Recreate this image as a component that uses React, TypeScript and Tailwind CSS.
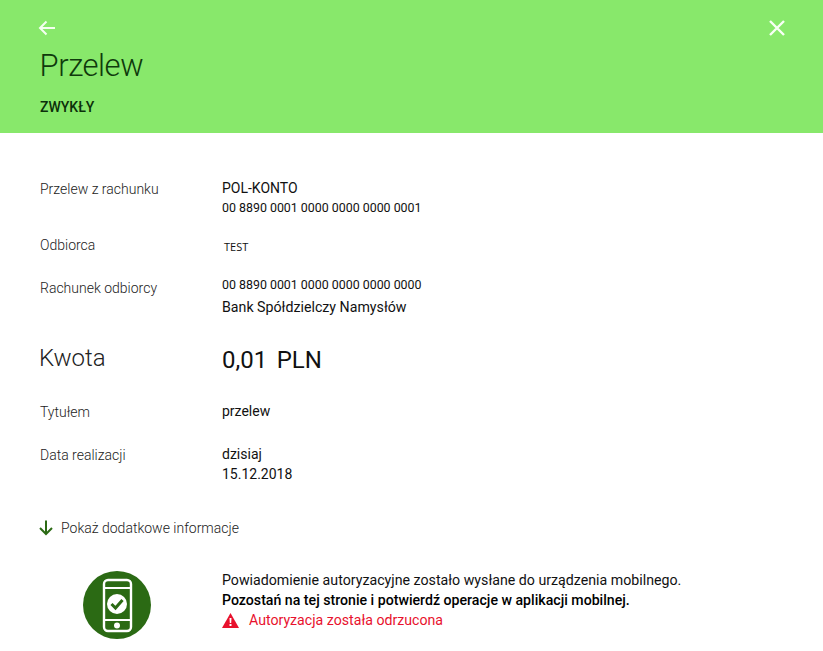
import React from "react";

function Row({ label, children, className = "" }: { label: string; children: React.ReactNode; className?: string }) {
  return (
    <div className={`flex ${className}`}>
      <div className="w-[182px] shrink-0 text-[14px] leading-[20px] text-[#222222] font-light mt-[1px]">{label}</div>
      <div className="text-[14px] leading-[20px] text-[#111111]">{children}</div>
    </div>
  );
}

export default function App() {
  return (
    <div className="w-[823px] h-[651px] overflow-hidden bg-white font-['Roboto',sans-serif]">
      <header className="h-[133px] bg-[#88e86b] pl-10 pr-[37px] pt-[18px] flex flex-col">
        <div className="flex justify-between items-center h-[20px]">
          <svg width="18" height="16" viewBox="0 0 18 16" fill="none" stroke="#f4fff0" strokeWidth="2" className="-ml-[2px]">
            <path d="M17 8H2M8.500 1.500 2 8l6.500 6.500" />
          </svg>
          <svg width="18" height="18" viewBox="0 0 18 18" fill="none" stroke="#f8fff5" strokeWidth="2.400">
            <path d="M2 2l14 14M16 2 2 16" />
          </svg>
        </div>
        <h1 className="mt-[8px] -ml-[0.5px] text-[31px] leading-[40px] font-light tracking-[-0.45px] text-[#0f3a0c]">Przelew</h1>
        <div className="mt-[11px] text-[14px] leading-[20px] font-medium text-[#0c300a]">ZWYKŁY</div>
      </header>

      <main className="pl-10 pt-[45px]">
        <Row label="Przelew z rachunku">
          <div className="leading-[20px]">POL-KONTO</div>
          <div className="text-[12.4px] leading-[18px] mt-[1px]">00 8890 0001 0000 0000 0000 0001</div>
        </Row>
        <Row label="Odbiorca" className="mt-[17px]">
          <div className="text-[11px] leading-[20px] pl-[2px] font-['Open_Sans',sans-serif] mt-[3px]">TEST</div>
        </Row>
        <Row label="Rachunek odbiorcy" className="mt-[20px]">
          <div className="text-[12.4px] leading-[18px] mt-[-1px]">00 8890 0001 0000 0000 0000 0000</div>
          <div className="text-[14.2px] leading-[20px] mt-[3px]">Bank Spółdzielczy Namysłów</div>
        </Row>
        <div className="flex items-center mt-[21px] h-[40px]">
          <div className="w-[182px] text-[24px] font-light text-[#222222] -ml-[1px]">Kwota</div>
          <div className="text-[24px] text-[#111111] flex gap-[9.5px] mt-[4px] ml-[1px]">
            <span>0,01</span>
            <span>PLN</span>
          </div>
        </div>
        <Row label="Tytułem" className="mt-[23px]">przelew</Row>
        <Row label="Data realizacji" className="mt-[22px]">
          <div>dzisiaj</div>
          <div>15.12.2018</div>
        </Row>
        <div className="flex items-center mt-[34px] h-[20px]">
          <svg width="14" height="16" viewBox="0 0 14 16" fill="none" stroke="#2b6a14" strokeWidth="2" className="mr-[8px] -ml-[1px]">
            <path d="M7 0.500V14M1 8l6 6 6-6" />
          </svg>
          <span className="text-[14px] font-light text-[#222222]">Pokaż dodatkowe informacje</span>
        </div>
        <div className="flex mt-[25px]">
          <div className="w-[182px] shrink-0 pl-[43px] pt-[8px]">
            <svg width="68" height="68" viewBox="0 0 68 68">
              <circle cx="34" cy="34" r="34" fill="#2b6a14" />
              <rect x="21" y="9" width="27" height="51" rx="4" fill="none" stroke="#fff" strokeWidth="2.400" />
              <path d="M21 17h27M21 49h27" stroke="#fff" strokeWidth="2.200" />
              <circle cx="34" cy="33" r="10" fill="#fff" />
              <path d="M28.500 33l4 4 7-8" fill="none" stroke="#2b6a14" strokeWidth="3" />
              <circle cx="34" cy="54.500" r="3" fill="#fff" />
            </svg>
          </div>
          <div className="text-[14.15px] leading-[20px] text-[#111111] pt-[7px]">
            <div className="text-[14.2px]">Powiadomienie autoryzacyjne zostało wysłane do urządzenia mobilnego.</div>
            <div className="font-medium text-[#000000]">Pozostań na tej stronie i potwierdź operacje w aplikacji mobilnej.</div>
            <div className="flex items-center text-[#e8112d]">
              <svg width="17" height="15" viewBox="0 0 17 15" className="mr-[10px]">
                <path d="M8.500 0 17 15H0z" fill="#e8112d" />
                <path d="M7.500 5h2l-.3 5H7.800zM7.500 11h2v2h-2z" fill="#fff" />
              </svg>
              <span>Autoryzacja została odrzucona</span>
            </div>
          </div>
        </div>
      </main>
    </div>
  );
}
